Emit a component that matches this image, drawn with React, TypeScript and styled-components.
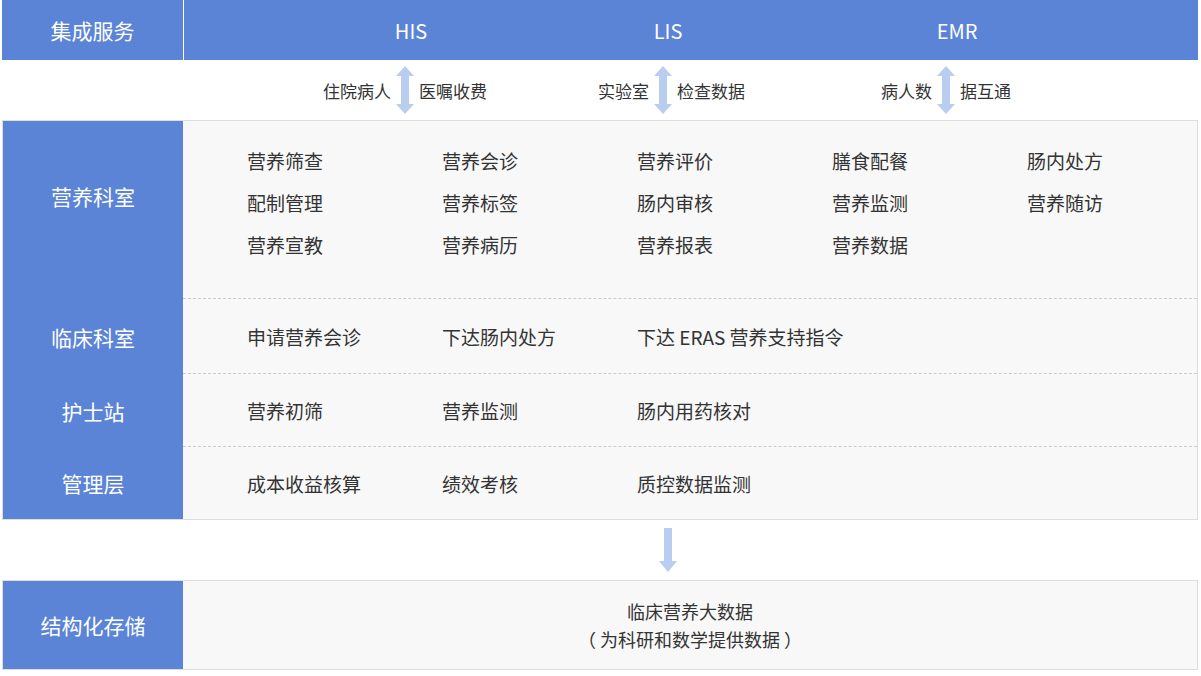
import styled, { createGlobalStyle } from "styled-components";

const Global = createGlobalStyle`
  body { margin: 0; background: #fff; font-family: "Microsoft YaHei", "Noto Sans CJK SC", sans-serif; }
`;

const Page = styled.div`
  width: 1201px;
  height: 676px;
  padding: 0 3px 0 2px;
  box-sizing: border-box;
`;

const Header = styled.div`
  display: flex;
  height: 60px;
  background: #5b84d6;
  color: #fff;
  font-size: 20px;
  align-items: center;
`;

const HeadLabel = styled.div`
  width: 181px;
  flex-shrink: 0;
  height: 100%;
  display: flex;
  align-items: center;
  justify-content: center;
  border-right: 1px solid #fff;
  font-size: 21px;
`;

const HeadItem = styled.div<{ $ml: number }>`
  width: 100px;
  text-align: center;
  margin-left: ${({ $ml }) => $ml}px;
`;

const LinkRow = styled.div`
  display: flex;
  height: 60px;
  align-items: center;
  font-size: 17px;
  color: #333;
`;

const Link = styled.div<{ $ml: number }>`
  display: flex;
  align-items: center;
  gap: 4px;
  margin-left: ${({ $ml }) => $ml}px;
`;

const Panel = styled.div<{ $h: number }>`
  display: flex;
  height: ${({ $h }) => $h}px;
  background: #f8f8f8;
  border: 1px solid #ddd;
  box-sizing: border-box;
`;

const Side = styled.div`
  width: 180px;
  flex-shrink: 0;
  background: #5b84d6;
  display: flex;
  flex-direction: column;
  color: #fff;
  font-size: 21px;
`;

const SideCell = styled.div<{ $h: number; $pad?: number }>`
  height: ${({ $h }) => $h}px;
  display: flex;
  align-items: center;
  justify-content: center;
  padding-bottom: ${({ $pad }) => $pad || 0}px;
  box-sizing: border-box;
`;

const Body = styled.div`
  flex: 1;
  display: flex;
  flex-direction: column;
`;

const Section = styled.div<{ $h: number; $dashed?: boolean; $top?: boolean }>`
  height: ${({ $h }) => $h}px;
  box-sizing: border-box;
  border-bottom: ${({ $dashed }) => ($dashed ? "1px dashed #ccc" : "none")};
  display: flex;
  flex-direction: column;
  gap: 17px;
  justify-content: ${({ $top }) => ($top ? "flex-start" : "center")};
  padding-top: ${({ $top }) => ($top ? 27 : 0)}px;
  padding-left: 64px;
`;

const Grid = styled.div`
  display: grid;
  grid-template-columns: repeat(4, 195px) auto;
  font-size: 19px;
  color: #333;
  line-height: 25px;
  white-space: nowrap;
`;

const Center = styled.div`
  flex: 1;
  display: flex;
  flex-direction: column;
  align-items: center;
  justify-content: center;
  font-size: 18px;
  color: #333;
  line-height: 28px;
`;

const Gap = styled.div`
  height: 60px;
  display: flex;
  align-items: center;
  padding-left: 656px;
`;

const DoubleArrow = () => (
  <svg width="20" height="50" viewBox="0 0 20 50">
    <path d="M10 1 L19 11 H14 V39 H19 L10 49 L1 39 H6 V11 H1 Z" fill="#b9cdf0" />
  </svg>
);

const DownArrow = () => (
  <svg width="20" height="46" viewBox="0 0 20 46">
    <path d="M6 1 H14 V34 H19 L10 45 L1 34 H6 Z" fill="#b9cdf0" />
  </svg>
);

const rows = [
  ["营养筛查", "营养会诊", "营养评价", "膳食配餐", "肠内处方"],
  ["配制管理", "营养标签", "肠内审核", "营养监测", "营养随访"],
  ["营养宣教", "营养病历", "营养报表", "营养数据", ""],
];

const Line = ({ items }: { items: string[] }) => (
  <Grid>
    {items.map((t, i) => (
      <div key={i}>{t}</div>
    ))}
  </Grid>
);

export default function App() {
  return (
    <Page>
      <Global />
      <Header>
        <HeadLabel>集成服务</HeadLabel>
        <HeadItem $ml={177}>HIS</HeadItem>
        <HeadItem $ml={157}>LIS</HeadItem>
        <HeadItem $ml={189}>EMR</HeadItem>
      </Header>
      <LinkRow>
        <Link $ml={321}>住院病人<DoubleArrow />医嘱收费</Link>
        <Link $ml={111}>实验室<DoubleArrow />检查数据</Link>
        <Link $ml={136}>病人数<DoubleArrow />据互通</Link>
      </LinkRow>
      <Panel $h={400}>
        <Side>
          <SideCell $h={178} $pad={28}>营养科室</SideCell>
          <SideCell $h={75}>临床科室</SideCell>
          <SideCell $h={73}>护士站</SideCell>
          <SideCell $h={72}>管理层</SideCell>
        </Side>
        <Body>
          <Section $h={178} $dashed $top>
            {rows.map((r, i) => (
              <Line key={i} items={r} />
            ))}
          </Section>
          <Section $h={75} $dashed>
            <Line items={["申请营养会诊", "下达肠内处方", "下达 ERAS 营养支持指令"]} />
          </Section>
          <Section $h={73} $dashed>
            <Line items={["营养初筛", "营养监测", "肠内用药核对"]} />
          </Section>
          <Section $h={72}>
            <Line items={["成本收益核算", "绩效考核", "质控数据监测"]} />
          </Section>
        </Body>
      </Panel>
      <Gap>
        <DownArrow />
      </Gap>
      <Panel $h={90}>
        <Side>
          <SideCell $h={88}>结构化存储</SideCell>
        </Side>
        <Center>
          <div>临床营养大数据</div>
          <div>（ 为科研和数学提供数据 ）</div>
        </Center>
      </Panel>
    </Page>
  );
}
